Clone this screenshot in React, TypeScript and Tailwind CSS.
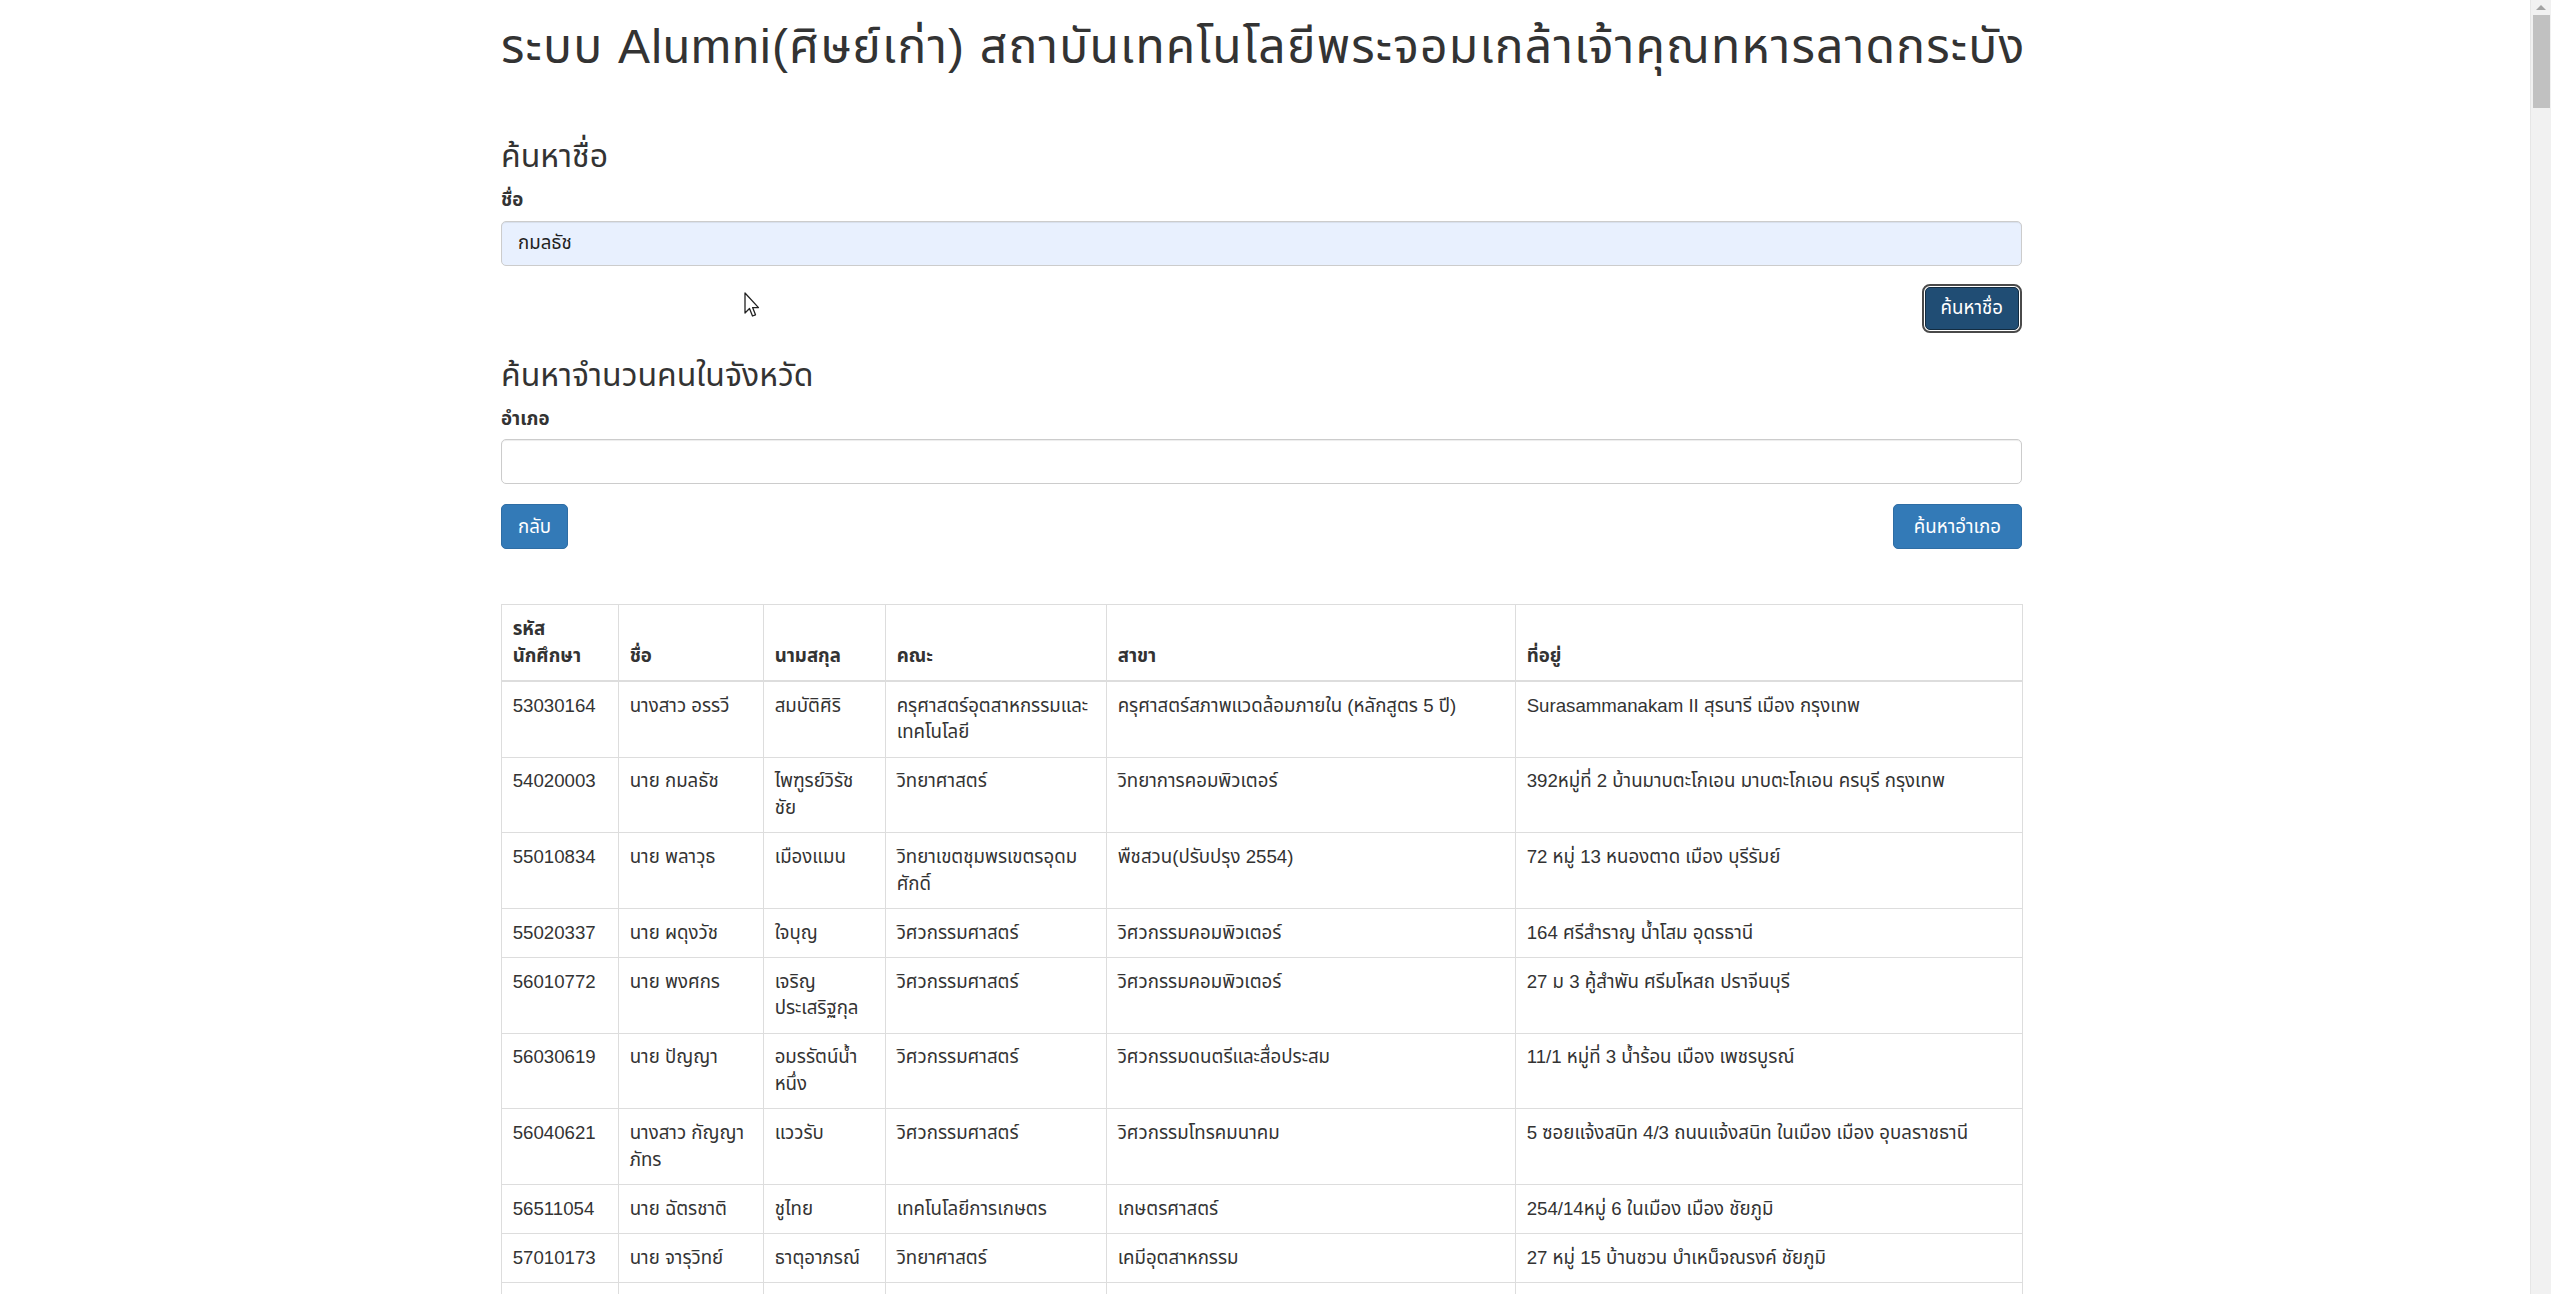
import React from 'react'

type Student = {
  id: string
  name: string
  surname: string
  faculty: string
  major: string
  address: string
}

// line breaks follow the wraps in the original table
const students: Student[] = [
  {
    id: '53030164',
    name: 'นางสาว อรรวี',
    surname: 'สมบัติศิริ',
    faculty: 'ครุศาสตร์อุตสาหกรรมและ\nเทคโนโลยี',
    major: 'ครุศาสตร์สภาพแวดล้อมภายใน (หลักสูตร 5 ปี)',
    address: 'Surasammanakam II สุรนารี เมือง กรุงเทพ',
  },
  {
    id: '54020003',
    name: 'นาย กมลธัช',
    surname: 'ไพฑูรย์วิรัช\nชัย',
    faculty: 'วิทยาศาสตร์',
    major: 'วิทยาการคอมพิวเตอร์',
    address: '392หมู่ที่ 2 บ้านมาบตะโกเอน มาบตะโกเอน ครบุรี กรุงเทพ',
  },
  {
    id: '55010834',
    name: 'นาย พลาวุธ',
    surname: 'เมืองแมน',
    faculty: 'วิทยาเขตชุมพรเขตรอุดม\nศักดิ์',
    major: 'พืชสวน(ปรับปรุง 2554)',
    address: '72 หมู่ 13 หนองตาด เมือง บุรีรัมย์',
  },
  {
    id: '55020337',
    name: 'นาย ผดุงวัช',
    surname: 'ใจบุญ',
    faculty: 'วิศวกรรมศาสตร์',
    major: 'วิศวกรรมคอมพิวเตอร์',
    address: '164 ศรีสำราญ น้ำโสม อุดรธานี',
  },
  {
    id: '56010772',
    name: 'นาย พงศกร',
    surname: 'เจริญ\nประเสริฐกุล',
    faculty: 'วิศวกรรมศาสตร์',
    major: 'วิศวกรรมคอมพิวเตอร์',
    address: '27 ม 3 คู้สำพัน ศรีมโหสถ ปราจีนบุรี',
  },
  {
    id: '56030619',
    name: 'นาย ปัญญา',
    surname: 'อมรรัตน์น้ำ\nหนึ่ง',
    faculty: 'วิศวกรรมศาสตร์',
    major: 'วิศวกรรมดนตรีและสื่อประสม',
    address: '11/1 หมู่ที่ 3 น้ำร้อน เมือง เพชรบูรณ์',
  },
  {
    id: '56040621',
    name: 'นางสาว กัญญา\nภัทร',
    surname: 'แววรับ',
    faculty: 'วิศวกรรมศาสตร์',
    major: 'วิศวกรรมโทรคมนาคม',
    address: '5 ซอยแจ้งสนิท 4/3 ถนนแจ้งสนิท ในเมือง เมือง อุบลราชธานี',
  },
  {
    id: '56511054',
    name: 'นาย ฉัตรชาติ',
    surname: 'ชูไทย',
    faculty: 'เทคโนโลยีการเกษตร',
    major: 'เกษตรศาสตร์',
    address: '254/14หมู่ 6 ในเมือง เมือง ชัยภูมิ',
  },
  {
    id: '57010173',
    name: 'นาย จารุวิทย์',
    surname: 'ธาตุอาภรณ์',
    faculty: 'วิทยาศาสตร์',
    major: 'เคมีอุตสาหกรรม',
    address: '27 หมู่ 15 บ้านชวน บำเหน็จณรงค์ ชัยภูมิ',
  },
]

const headers = ['รหัส\nนักศึกษา', 'ชื่อ', 'นามสกุล', 'คณะ', 'สาขา', 'ที่อยู่']
const colWidths = ['w-[117px]', 'w-[145px]', 'w-[122px]', 'w-[221px]', 'w-[409px]', 'w-[507px]']

const font = "font-['Liberation_Sans','Noto_Sans_Thai','Noto_Sans',sans-serif]"

function Cursor() {
  return (
    <svg
      className="absolute left-[744px] top-[292px]"
      width="16"
      height="26"
      viewBox="0 0 16 26"
      aria-hidden="true"
    >
      <path
        d="M1 1 L1 21 L5.5 16.5 L8.5 24 L11.5 22.8 L8.6 15.6 L14.5 15.6 Z"
        fill="#fff"
        stroke="#222"
        strokeWidth="1.3"
        strokeLinejoin="round"
      />
    </svg>
  )
}

function Scrollbar() {
  return (
    <div className="w-[21px] h-full bg-[#f1f1f1] border-l border-[#e6e6e6] flex flex-col items-center shrink-0">
      <div className="h-[15px] w-full flex items-center justify-center">
        <div className="w-0 h-0 border-l-[5px] border-r-[5px] border-b-[5px] border-l-transparent border-r-transparent border-b-[#a3a3a3]" />
      </div>
      <div className="w-[17px] h-[93px] bg-[#c1c1c1]" />
    </div>
  )
}

export default function App() {
  return (
    <div className={`h-[1294px] w-full overflow-hidden flex bg-white text-[#333] ${font}`}>
      <main className="relative flex-1 h-full overflow-hidden">
        <div className="w-[1521px] ml-[501px] pt-[20px]">
          <h1 className="text-[48px] leading-[53px] text-center font-normal whitespace-nowrap tracking-[1.2px]">
            ระบบ Alumni(ศิษย์เก่า) สถาบันเทคโนโลยีพระจอมเกล้าเจ้าคุณทหารลาดกระบัง
          </h1>

          {/* search by name */}
          <h3 className="mt-[66px] text-[32px] leading-[35px] font-normal">ค้นหาชื่อ</h3>
          <div className="mt-[13px] flex flex-col">
            <label className="text-[18.67px] leading-[26.67px] font-bold mb-[7px]">ชื่อ</label>
            <input
              readOnly
              value="กมลธัช"
              className="h-[45px] w-full px-[16px] text-[18.67px] bg-[#e8f0fe] text-[#222] border border-[#ccc] rounded-[5px] shadow-[inset_0_1px_1px_rgba(0,0,0,0.075)] outline-none"
            />
          </div>
          <div className="mt-[21px] flex justify-end pr-[3px]">
            <button className="h-[43px] px-[15px] text-[18.67px] text-white bg-[#204d74] border border-[#122b40] rounded-[5px] outline-2 outline-[#4a4a4a] outline-offset-1">
              ค้นหาชื่อ
            </button>
          </div>

          {/* search by district */}
          <h3 className="mt-[28px] text-[32px] leading-[35px] font-normal">ค้นหาจำนวนคนในจังหวัด</h3>
          <div className="mt-[13px] flex flex-col">
            <label className="text-[18.67px] leading-[26.67px] font-bold mb-[7px]">อำเภอ</label>
            <input
              readOnly
              value=""
              className="h-[45px] w-full px-[16px] text-[18.67px] bg-white border border-[#ccc] rounded-[5px] shadow-[inset_0_1px_1px_rgba(0,0,0,0.075)] outline-none"
            />
          </div>
          <div className="mt-[20px] flex justify-between">
            <button className="h-[45px] px-[16px] text-[18.67px] text-white bg-[#337ab7] border border-[#2e6da4] rounded-[5px]">
              กลับ
            </button>
            <button className="h-[45px] px-[20px] text-[18.67px] text-white bg-[#337ab7] border border-[#2e6da4] rounded-[5px]">
              ค้นหาอำเภอ
            </button>
          </div>

          {/* results */}
          <table className="mt-[55px] w-full table-fixed border-collapse border border-[#ddd] text-[18.67px] leading-[26.67px]">
            <thead>
              <tr>
                {headers.map((h, i) => (
                  <th
                    key={h}
                    className={`${colWidths[i]} p-[10.67px] text-left align-bottom font-bold whitespace-pre-line border border-[#ddd] border-b-2`}
                  >
                    {h}
                  </th>
                ))}
              </tr>
            </thead>
            <tbody>
              {students.map((s) => (
                <tr key={s.id}>
                  {[s.id, s.name, s.surname, s.faculty, s.major, s.address].map((v, i) => (
                    <td key={i} className="p-[10.67px] align-top whitespace-pre border border-[#ddd] overflow-hidden">
                      {v}
                    </td>
                  ))}
                </tr>
              ))}
              {/* next row, only its top edge shows in the window */}
              <tr className="h-[49px]">
                {headers.map((h) => (
                  <td key={h} className="border border-[#ddd]" />
                ))}
              </tr>
            </tbody>
          </table>
        </div>
        <Cursor />
      </main>
      <Scrollbar />
    </div>
  )
}
